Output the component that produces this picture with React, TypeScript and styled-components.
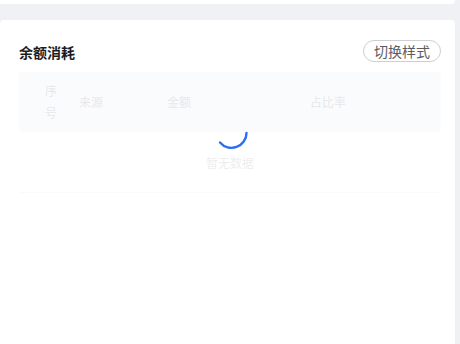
import styled, { createGlobalStyle, keyframes } from "styled-components";

const GlobalStyle = createGlobalStyle`
	html, body {
		margin: 0;
		padding: 0;
		background: #f0f1f5;
		font-family: "Noto Sans CJK SC", "Noto Sans", sans-serif;
	}
`;

const Page = styled.div`
	width: 455px;
	height: 344px;
	display: flex;
	flex-direction: column;
	gap: 16px;
	overflow: hidden;
`;

const TopCard = styled.div`
	height: 4px;
	background: #fff;
	border-radius: 0 0 4px 0;
`;

const Card = styled.div`
	flex: 1;
	background: #fff;
	border-radius: 4px 4px 0 0;
	padding: 20px 14px 0 19px;
`;

const Header = styled.div`
	display: flex;
	align-items: center;
	justify-content: space-between;
	height: 22px;
`;

const Title = styled.div`
	font-size: 14px;
	font-weight: 700;
	color: #1d1d1f;
	padding-top: 1px;
`;

const SwitchButton = styled.button`
	height: 22px;
	padding: 0 10px;
	border: 1px solid #cfcfd3;
	border-radius: 11px;
	background: #fff;
	font-family: inherit;
	font-size: 14px;
	line-height: 20px;
	color: #5c5c62;
	cursor: pointer;
`;

const TableWrap = styled.div`
	position: relative;
	margin-top: 10px;
`;

const HeadRow = styled.div`
	display: grid;
	grid-template-columns: 48px 88px 143px 1fr;
	align-items: center;
	height: 60px;
	background: #eef1f8;
	border-radius: 4px;
`;

const HeadCell = styled.div<{ $left?: number; $narrow?: boolean }>`
	padding-left: ${({ $left }) => $left ?? 12}px;
	padding-right: ${({ $narrow }) => ($narrow ? 10 : 12)}px;
	font-size: 12px;
	line-height: 22px;
	color: #a9a9ae;
	word-break: break-all;
`;

const EmptyBody = styled.div`
	height: 61px;
	display: flex;
	justify-content: center;
	padding-top: 22px;
	box-sizing: border-box;
	border-bottom: 1px solid #eaebef;
	font-size: 12px;
	color: #bdbdc2;
`;

const Mask = styled.div`
	position: absolute;
	inset: 0;
	background: rgba(255, 255, 255, 0.72);
	display: flex;
	align-items: center;
	justify-content: center;
`;

const spin = keyframes`
	from { transform: rotate(0deg); }
	to { transform: rotate(360deg); }
`;

const Spinner = styled.svg`
	width: 34px;
	height: 34px;
	margin-left: 4px;
	margin-top: 2px;
	animation: ${spin} 1s linear infinite;
	animation-play-state: paused;
`;

export default function App() {
	return (
		<>
			<GlobalStyle />
			<Page>
				<TopCard />
				<Card>
					<Header>
						<Title>余额消耗</Title>
						<SwitchButton>切换样式</SwitchButton>
					</Header>
					<TableWrap>
						<HeadRow>
							<HeadCell $left={26} $narrow>序号</HeadCell>
							<HeadCell>来源</HeadCell>
							<HeadCell>金额</HeadCell>
							<HeadCell>占比率</HeadCell>
						</HeadRow>
						<EmptyBody>暂无数据</EmptyBody>
						<Mask>
							<Spinner viewBox="0 0 34 34">
								<path
									d="M31.5 16 A15 15 0 0 1 5 25.5"
									fill="none"
									stroke="#2a6ff5"
									strokeWidth="2.4"
									strokeLinecap="round"
								/>
							</Spinner>
						</Mask>
					</TableWrap>
				</Card>
			</Page>
		</>
	);
}
